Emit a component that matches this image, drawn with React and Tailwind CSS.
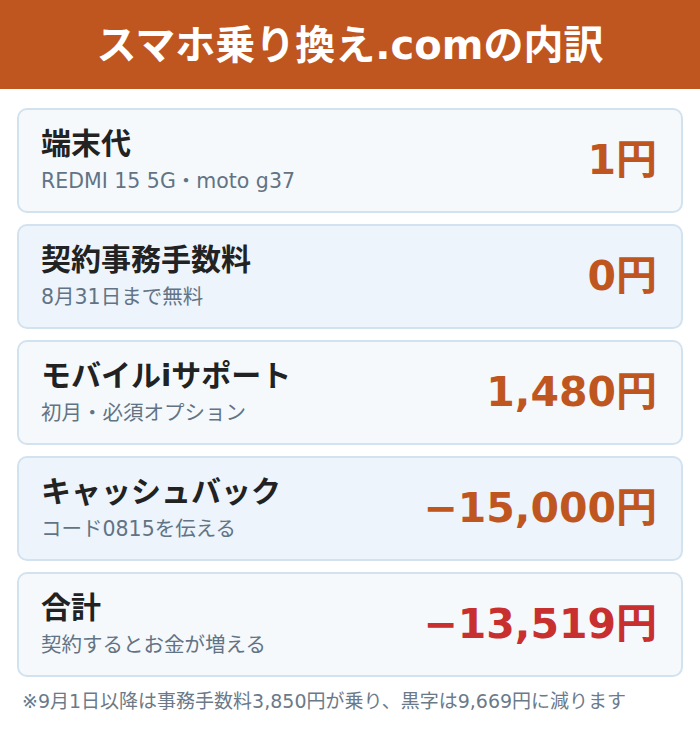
const rows = [
  { t: "端末代", s: "REDMI 15 5G・moto g37", a: "1円", bg: "bg-[#f5f9fc]", c: "text-[#c0561f]" },
  { t: "契約事務手数料", s: "8月31日まで無料", a: "0円", bg: "bg-[#edf4fb]", c: "text-[#c0561f]" },
  { t: "モバイルiサポート", s: "初月・必須オプション", a: "1,480円", bg: "bg-[#f5f9fc]", c: "text-[#c0561f]" },
  { t: "キャッシュバック", s: "コード0815を伝える", a: "−15,000円", bg: "bg-[#edf4fb]", c: "text-[#c0561f]" },
  { t: "合計", s: "契約するとお金が増える", a: "−13,519円", bg: "bg-[#f5f9fc]", c: "text-[#c8302f]" },
];

export default function App() {
  return (
    <div className="w-[700px] h-[752px] bg-white font-['DejaVu_Sans','Noto_Sans_CJK_JP',sans-serif]">
      <div className="h-[89px] bg-[#c0561f] flex items-center justify-center">
        <h1 className="text-white font-bold text-[40px] leading-none">スマホ乗り換え.comの内訳</h1>
      </div>
      <div className="px-[17px] pt-[19px] flex flex-col gap-[11px]">
        {rows.map((r, i) => (
          <div key={i} className={`h-[105px] rounded-[10px] border-2 border-[#d3e2ef] ${r.bg} flex items-center justify-between pl-[22px] pr-[24px]`}>
            <div className="flex flex-col">
              <div className="text-[30px] font-bold text-[#222222] leading-[36px]">{r.t}</div>
              <div className="text-[20.5px] text-[#627384] leading-[28px] mt-[5px]">{r.s}</div>
            </div>
            <div className={`text-[41px] font-bold leading-none ${r.c}`}>{r.a}</div>
          </div>
        ))}
      </div>
      <div className="pl-[22px] pt-[10px] text-[19px] text-[#6b7a89] leading-[28px]">
        ※9月1日以降は事務手数料3,850円が乗り、黒字は9,669円に減ります
      </div>
    </div>
  );
}
